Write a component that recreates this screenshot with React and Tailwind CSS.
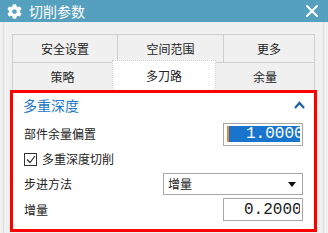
import React from "react";
import { FaCog } from "react-icons/fa";

const font = { fontFamily: '"Noto Sans CJK SC", "Noto Sans", sans-serif' };
const mono = { fontFamily: '"Liberation Mono", "DejaVu Sans Mono", monospace' };

const Tab = ({ label, className = "" }) => (
  <div
    className={`flex items-center justify-center border-l border-t border-[#cfcfcf] text-[12px] text-[#222] ${className}`}
  >
    {label}
  </div>
);

export default function App() {
  return (
    <div className="w-[328px] h-[233px] bg-[#f0f0f0] flex flex-col overflow-hidden" style={font}>
      {/* Title bar */}
      <div className="h-[22px] bg-[#55a0be] flex items-center pl-[7px] pr-[10px] text-white">
        <FaCog className="w-[15px] h-[15px]" />
        <span className="ml-[7px] text-[14px] leading-none">切削参数</span>
        <div className="flex-1" />
        <svg width="12" height="12" viewBox="0 0 12 12">
          <path d="M1 1 L11 11 M11 1 L1 11" stroke="white" strokeWidth="2" strokeLinecap="square" />
        </svg>
      </div>

      {/* Body */}
      <div className="flex-1 ml-[3px] mr-[4px] border-x border-[#dadada] pt-[12px] pl-[6px] pr-[6px] flex flex-col">
        {/* Tabs */}
        <div className="mx-[2px]">
          <div className="grid grid-cols-[105px_106px_1fr] h-[28px] border-r border-[#cfcfcf]">
            <Tab label="安全设置" />
            <Tab label="空间范围" />
            <Tab label="更多" />
          </div>
          <div className="grid grid-cols-[100px_104px_1fr] h-[28px] border-r border-[#cfcfcf]">
            <Tab label="策略" />
            <div className="relative z-10 -mt-[2px] h-[30px] bg-white border-x border-[#cfcfcf] border-t border-dotted flex items-center justify-center text-[12px] text-[#222]">
              多刀路
            </div>
            <Tab label="余量" className="border-l-0" />
          </div>
        </div>

        {/* Panel */}
        <div className="h-[142px] border-[3px] border-[#ff0000] bg-white flex flex-col text-[12px] text-[#222]">
          <div className="h-[24px] flex items-center pl-[10px] pr-[9px]">
            <span className="text-[14px] text-[#1e78c8]">多重深度</span>
            <div className="flex-1" />
            <svg width="11" height="8" viewBox="0 0 11 8">
              <path d="M1 7 L5.5 2 L10 7" stroke="#1f5f9f" strokeWidth="2.2" fill="none" />
            </svg>
          </div>

          <div className="mt-[5px] h-[24px] flex items-center pl-[11px] pr-[11px]">
            <span>部件余量偏置</span>
            <div className="flex-1" />
            <div className="w-[80px] h-[23px] border border-[#a8a8a8] bg-white relative flex items-center overflow-hidden pl-[3px] pr-[2px]">
              <div className="w-[2px] h-[16px] bg-[#e8862f]" />
              <div
                className="flex-1 h-[16px] bg-[#1874cd] text-white text-[16px] leading-[16px] whitespace-nowrap overflow-hidden pl-[17px]"
                style={mono}
              >
                1.00000
              </div>
            </div>
          </div>

          <div className="h-[26px] flex items-center pl-[11px]">
            <div className="w-[13px] h-[13px] border border-[#333] bg-white flex items-center justify-center">
              <svg width="10" height="9" viewBox="0 0 10 9">
                <path d="M1 4.5 L4 7.5 L9 1" stroke="#333" strokeWidth="1.2" fill="none" />
              </svg>
            </div>
            <span className="ml-[5px]">多重深度切削</span>
          </div>

          <div className="h-[24px] flex items-center pl-[11px] pr-[11px]">
            <span>步进方法</span>
            <div className="flex-1" />
            <div className="w-[140px] h-[22px] border border-[#a8a8a8] bg-white flex items-center pl-[4px] pr-[6px]">
              <span>增量</span>
              <div className="flex-1" />
              <svg width="8" height="5" viewBox="0 0 8 5">
                <path d="M0 0 L8 0 L4 5 Z" fill="#111" />
              </svg>
            </div>
          </div>

          <div className="mt-[1px] h-[25px] flex items-center pl-[11px] pr-[11px]">
            <span>增量</span>
            <div className="flex-1" />
            <div className="w-[80px] h-[23px] border border-[#a8a8a8] bg-white flex items-center overflow-hidden pl-[20px] pr-[2px]">
              <div className="flex-1 whitespace-nowrap overflow-hidden text-[16px] leading-[16px] text-[#222]" style={mono}>
                0.20000
              </div>
            </div>
          </div>
        </div>
      </div>
    </div>
  );
}
